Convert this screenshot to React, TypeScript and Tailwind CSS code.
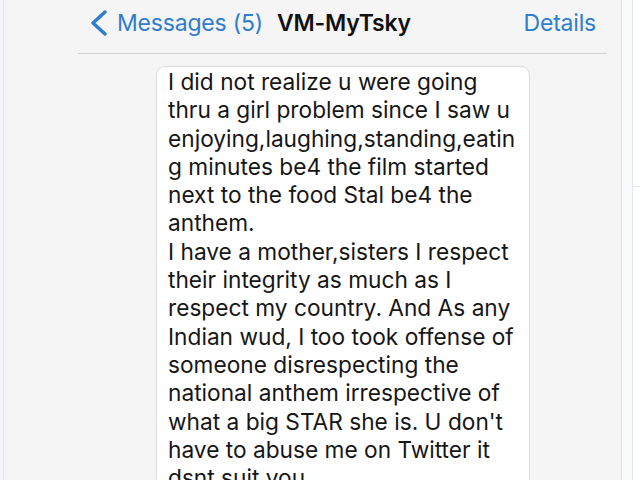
import React from 'react';

const lines = [
    'I did not realize u were going',
    'thru a girl problem since I saw u',
    'enjoying,laughing,standing,eatin',
    'g minutes be4 the film started',
    'next to the food Stal be4 the',
    'anthem.',
    'I have a mother,sisters I respect',
    'their integrity as much as I',
    'respect my country. And As any',
    "Indian wud, I too took offense of",
    'someone disrespecting the',
    'national anthem irrespective of',
    "what a big STAR she is. U don't",
    'have to abuse me on Twitter it',
    'dsnt suit you.',
];

const BackChevron: React.FC = () => (
    <svg width="19" height="26" viewBox="0 0 19 26" className="shrink-0">
        <polyline points="16,2 4,13 16,24" fill="none" stroke="#2f7dd1" strokeWidth="3.4" strokeLinecap="round" strokeLinejoin="round" />
    </svg>
);

const App: React.FC = () => {
    return (
        <div className="w-[640px] h-[480px] overflow-hidden flex bg-[#f5f6f8] font-['Inter',sans-serif]">
            <div className="w-[3px] shrink-0 bg-[#f3f5f9]" />
            <div className="w-px shrink-0 bg-[#dfe4eb]" />

            <div className="w-[617px] shrink-0 flex flex-col bg-[#f5f5f6]">
                <div className="h-[53px] flex items-center pl-[85px] pr-[25px] pb-[7px] shrink-0 whitespace-nowrap">
                    <BackChevron />
                    <span className="ml-[9px] text-[23px] text-[#2f7dd1] tracking-[-0.2px]">Messages (5)</span>
                    <span className="ml-[14px] text-[23px] font-semibold text-[#111] tracking-[-0.2px]">VM-MyTsky</span>
                    <span className="ml-auto text-[23px] text-[#2f7dd1] tracking-[-0.2px]">Details</span>
                </div>
                <div className="h-px ml-[74px] mr-[14px] bg-[#d2d3d6] shrink-0" />

                <div className="ml-[152px] mt-[12px] w-[374px] bg-white border border-[#dcdcde] rounded-[9px] pl-[11px] pt-[1px] pb-4 text-[22.7px] leading-[28.3px] text-[#161616]">
                    {lines.map((l, i) => (
                        <div key={i} className="whitespace-nowrap">{l}</div>
                    ))}
                </div>
            </div>

            <div className="w-px shrink-0 bg-[#e0e4ea]" />
            <div className="w-[10px] shrink-0 bg-[#f8fafc]" />
            <div className="w-px shrink-0 bg-[#e3e7ec]" />
            <div className="w-[7px] shrink-0 bg-white flex flex-col">
                <div className="h-[186px]" />
                <div className="h-px bg-[#e6e9ee]" />
            </div>
        </div>
    );
};

export default App;
